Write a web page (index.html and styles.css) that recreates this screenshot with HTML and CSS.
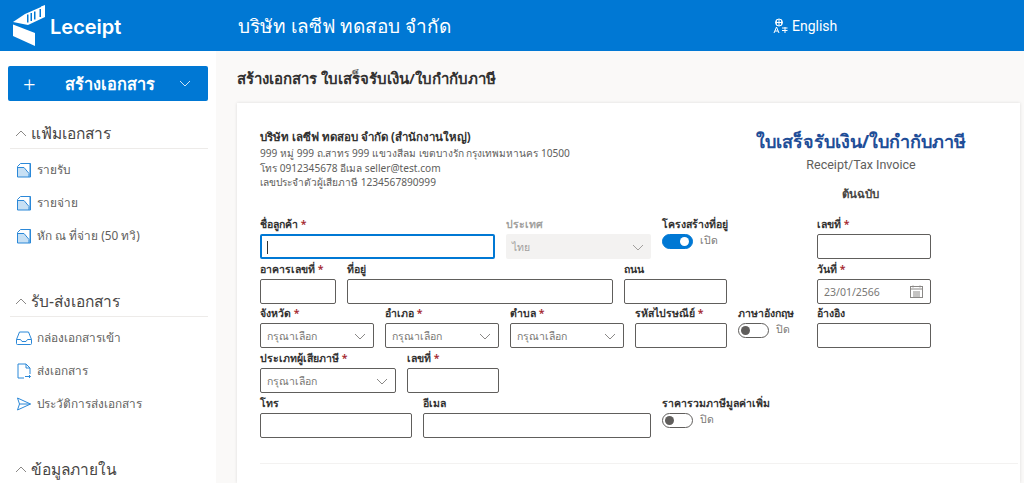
FILE: index.html
```html
<!DOCTYPE html>
<html lang="th">
<head>
<meta charset="utf-8">
<title>Leceipt</title>
<link rel="stylesheet" href="styles.css">
</head>
<body>
<header class="topbar">
  <div class="brand">
    <svg class="logo" width="34" height="42" viewBox="0 0 34 42"><path fill="#fff" d="M0 19.500L22 28V41L0 31Z"/><path fill="#fff" d="M0 17L12 9 28 2V1.500L32 0V12L15 20Z"/><path fill="#0078d4" d="M14 9.500h1.500v8H14zM17.500 8h1.500v8h-1.500zM21 6.500h1.500v8H21zM26.500 4h1.500v8h-1.500z"/></svg>
    <span class="brand-name">Leceipt</span>
  </div>
  <div class="company">บริษัท เลซีฟ ทดสอบ จำกัด</div>
  <div class="lang">
    <svg width="15" height="16" viewBox="0 0 15 16" fill="none" stroke="#fff" stroke-width="1"><circle cx="6" cy="4.500" r="3.500"/><path d="M2.500 4.500h7M6 1v7M4 1.500c-1 2-1 4 0 6M8 1.500c1 2 1 4 0 6M9 10h5.500M9 12.500h5.500M12 9v6M1 15l2.500-6 2.500 6M2 13h3"/></svg>
    <span>English</span>
  </div>
</header>
<div class="shell">
  <aside class="sidebar">
    <button class="create"><span class="plus">+</span><span class="create-text">สร้างเอกสาร</span><svg class="chev" width="12" height="7" viewBox="0 0 12 7"><path d="M1 1l5 5 5-5" fill="none" stroke="#cfe4f6"/></svg></button>
    <section class="nav-group">
      <h3 class="nav-title"><svg width="12" height="7" viewBox="0 0 12 7"><path d="M1 6l5-5 5 5" fill="none" stroke="#8a8886"/></svg>แฟ้มเอกสาร</h3>
      <a class="nav-item"><svg class="nav-icon" viewBox="0 0 16 16"><path fill="#c7e0f4" d="M2 6h6l5 6v3H2z"/><path fill="none" stroke="#2b88d8" d="M1.500 4.500L4.500 1.500h10v13.500h-13zM1.500 5.500h6.500l5 6v3.500M14 1.500v13"/></svg>รายรับ</a>
      <a class="nav-item"><svg class="nav-icon" viewBox="0 0 16 16"><path fill="#c7e0f4" d="M2 6h6l5 6v3H2z"/><path fill="none" stroke="#2b88d8" d="M1.500 4.500L4.500 1.500h10v13.500h-13zM1.500 5.500h6.500l5 6v3.500M14 1.500v13"/></svg>รายจ่าย</a>
      <a class="nav-item"><svg class="nav-icon" viewBox="0 0 16 16"><path fill="#c7e0f4" d="M2 6h6l5 6v3H2z"/><path fill="none" stroke="#2b88d8" d="M1.500 4.500L4.500 1.500h10v13.500h-13zM1.500 5.500h6.500l5 6v3.500M14 1.500v13"/></svg>หัก ณ ที่จ่าย (50 ทวิ)</a>
    </section>
    <section class="nav-group">
      <h3 class="nav-title"><svg width="12" height="7" viewBox="0 0 12 7"><path d="M1 6l5-5 5 5" fill="none" stroke="#8a8886"/></svg>รับ-ส่งเอกสาร</h3>
      <a class="nav-item"><svg class="nav-icon" viewBox="0 0 16 16" fill="none" stroke="#2b88d8"><path d="M3.500 2h9l3 7.500v4a1 1 0 0 1-1 1h-13a1 1 0 0 1-1-1v-4z"/><path d="M.5 9.500h4l1.500 2h4l1.500-2h4"/></svg>กล่องเอกสารเข้า</a>
      <a class="nav-item"><svg class="nav-icon" viewBox="0 0 16 16" fill="none" stroke="#2b88d8"><path d="M8 15H2V1h8l4 4v6"/><path d="M10 1v4h4M9 13.500h5.500M13 12l1.500 1.500L13 15"/></svg>ส่งเอกสาร</a>
      <a class="nav-item"><svg class="nav-icon" viewBox="0 0 16 16" fill="none" stroke="#2b88d8"><path d="M1.500 2l13 6-13 6 2-6zM3.500 8h11"/></svg>ประวัติการส่งเอกสาร</a>
    </section>
    <section class="nav-group">
      <h3 class="nav-title nav-title-last"><svg width="12" height="7" viewBox="0 0 12 7"><path d="M1 6l5-5 5 5" fill="none" stroke="#8a8886"/></svg>ข้อมูลภายใน</h3>
    </section>
  </aside>
  <main class="main">
    <h2 class="page-title">สร้างเอกสาร ใบเสร็จรับเงิน/ใบกำกับภาษี</h2>
    <div class="card">
      <div class="doc-head">
        <div class="seller">
          <div class="seller-name">บริษัท เลซีฟ ทดสอบ จำกัด (สำนักงานใหญ่)</div>
          <div>999 หมู่ 999 ถ.สาทร 999 แขวงสีลม เขตบางรัก กรุงเทพมหานคร 10500</div>
          <div>โทร 0912345678 อีเมล seller@test.com</div>
          <div>เลขประจำตัวผู้เสียภาษี 1234567890999</div>
        </div>
        <div class="doc-type">
          <div class="doc-th">ใบเสร็จรับเงิน/ใบกำกับภาษี</div>
          <div class="doc-en">Receipt/Tax Invoice</div>
          <div class="doc-copy">ต้นฉบับ</div>
        </div>
      </div>
      <form class="form">
        <div class="row">
          <div class="field w235"><label>ชื่อลูกค้า <i>*</i></label><div class="box focus"><span class="caret"></span></div></div>
          <div class="field w145"><label class="off">ประเทศ</label><div class="box disabled"><span>ไทย</span><svg class="dd" width="12" height="7" viewBox="0 0 12 7"><path d="M1 1l5 5 5-5" fill="none" stroke="#a19f9d"/></svg></div></div>
          <div class="field w144"><label>โครงสร้างที่อยู่</label><div class="toggle-line"><span class="toggle on"></span><span class="toggle-text">เปิด</span></div></div>
          <div class="field w114"><label>เลขที่ <i>*</i></label><div class="box"></div></div>
        </div>
        <div class="row">
          <div class="field w76"><label>อาคารเลขที่ <i>*</i></label><div class="box"></div></div>
          <div class="field w266"><label>ที่อยู่</label><div class="box"></div></div>
          <div class="field w103"><label>ถนน</label><div class="box"></div></div>
          <div class="field w68"></div>
          <div class="field w114"><label>วันที่ <i>*</i></label><div class="box"><span>23/01/2566</span><svg class="dd" width="13" height="13" viewBox="0 0 13 13" fill="none" stroke="#8a8886"><rect x=".5" y="1.500" width="12" height="11"/><path d="M.5 4h12M3 7h7M3 9h7M3 11h7M3 .5v2M10 .5v2"/></svg></div></div>
        </div>
        <div class="row">
          <div class="field w114"><label>จังหวัด <i>*</i></label><div class="box"><span>กรุณาเลือก</span><svg class="dd" width="12" height="7" viewBox="0 0 12 7"><path d="M1 1l5 5 5-5" fill="none" stroke="#8a8886"/></svg></div></div>
          <div class="field w114"><label>อำเภอ <i>*</i></label><div class="box"><span>กรุณาเลือก</span><svg class="dd" width="12" height="7" viewBox="0 0 12 7"><path d="M1 1l5 5 5-5" fill="none" stroke="#8a8886"/></svg></div></div>
          <div class="field w114"><label>ตำบล <i>*</i></label><div class="box"><span>กรุณาเลือก</span><svg class="dd" width="12" height="7" viewBox="0 0 12 7"><path d="M1 1l5 5 5-5" fill="none" stroke="#8a8886"/></svg></div></div>
          <div class="field w92"><label>รหัสไปรษณีย์ <i>*</i></label><div class="box"></div></div>
          <div class="field w68"><label>ภาษาอังกฤษ</label><div class="toggle-line"><span class="toggle"></span><span class="toggle-text">ปิด</span></div></div>
          <div class="field w114"><label>อ้างอิง</label><div class="box"></div></div>
        </div>
        <div class="row">
          <div class="field w136"><label>ประเภทผู้เสียภาษี <i>*</i></label><div class="box"><span>กรุณาเลือก</span><svg class="dd" width="12" height="7" viewBox="0 0 12 7"><path d="M1 1l5 5 5-5" fill="none" stroke="#8a8886"/></svg></div></div>
          <div class="field w92"><label>เลขที่ <i>*</i></label><div class="box"></div></div>
        </div>
        <div class="row">
          <div class="field w152"><label>โทร</label><div class="box"></div></div>
          <div class="field w228"><label>อีเมล</label><div class="box"></div></div>
          <div class="field w144"><label class="nowrap">ราคารวมภาษีมูลค่าเพิ่ม</label><div class="toggle-line"><span class="toggle"></span><span class="toggle-text">ปิด</span></div></div>
        </div>
      </form>
      <hr class="rule">
    </div>
  </main>
</div>
</body>
</html>
```
FILE: styles.css
```css
* { box-sizing: border-box; }
html, body { margin: 0; height: 483px; overflow: hidden; }
body { font-family: "Noto Sans", "Open Sans", "Segoe UI", sans-serif; color: #323130; background: #faf9f8; font-size: 11px; }
.topbar { height: 51px; background: #0078d4; color: #fff; display: flex; align-items: center; }
.brand { width: 238px; display: flex; align-items: center; padding-left: 13px; gap: 3px; }
.logo { display: block; margin-top: 1px; }
.brand-name { font-family: "Inter", sans-serif; font-weight: 600; font-size: 20px; padding-top: 3px; }
.company { font-size: 19px; width: 535px; white-space: nowrap; }
.lang { display: flex; align-items: center; gap: 4px; font-size: 14px; font-family: "Roboto", sans-serif; }
.shell { display: flex; height: 432px; }
.sidebar { width: 216px; background: #fff; padding: 15px 8px 0; flex: none; overflow: hidden; }
.create { width: 200px; height: 35px; background: #0078d4; border: 0; border-radius: 2px; color: #fff; display: flex; align-items: center; padding: 0 17px 0 15px; font-family: inherit; }
.plus { font-size: 22px; font-weight: 300; line-height: 1; width: 42px; text-align: left; }
.create-text { font-size: 16.300px; font-weight: 700; width: 100px; flex: none; text-align: left; }
.chev { margin-left: auto; }
.nav-group { margin-bottom: 17px; }
.nav-title { margin: 0 0 4px 2px; padding: 17px 0 0 5px; height: 48px; border-bottom: 1px solid #edebe9; font-size: 15.500px; font-weight: 400; color: #484644; display: flex; align-items: center; gap: 4px; }
.nav-title-last { border-bottom-color: transparent; }
.nav-item { display: flex; align-items: center; height: 33px; padding-left: 8px; gap: 5px; font-size: 11.800px; color: #605e5c; }
.nav-icon { width: 16px; height: 16px; flex: none; }
.main { flex: 1; padding: 0 4px 0 21px; min-width: 0; }
.page-title { margin: 0; height: 52px; padding-top: 4px; display: flex; align-items: center; font-size: 15px; font-weight: 600; color: #323130; }
.card { background: #fff; height: 380px; padding: 22px 2px 0 23px; box-shadow: 0 0 3px rgba(0,0,0,.12); }
.doc-head { display: flex; height: 89px; }
.seller { width: 481px; font-size: 10.150px; line-height: 14.500px; color: #605e5c; padding-top: 3px; }
.seller-name { font-weight: 700; font-size: 11.500px; color: #323130; line-height: 18px; }
.doc-type { width: 240px; text-align: center; }
.doc-th { font-size: 18px; font-weight: 700; color: #1f4e98; line-height: 32px; }
.doc-en { font-size: 12.500px; color: #605e5c; font-family: "Roboto", sans-serif; line-height: 14px; margin-top: 1px; }
.doc-copy { font-size: 11.500px; font-weight: 600; color: #484644; margin-top: 13px; padding-right: 2px; }
.row { display: flex; gap: 11px; height: 44.700px; }
.field { flex: none; }
.w235 { width: 235px; } .w145 { width: 145px; } .w144 { width: 144px; } .w114 { width: 114px; }
.w76 { width: 76px; } .w266 { width: 266px; } .w103 { width: 103px; } .w68 { width: 68px; }
.w136 { width: 136px; } .w92 { width: 92px; } .w152 { width: 152px; } .w228 { width: 228px; }
label { display: block; height: 20px; line-height: 20px; font-size: 10.500px; font-weight: 600; color: #323130; white-space: nowrap; }
label i { color: #a4262c; font-style: normal; }
label.off { color: #a19f9d; }
.box { height: 25px; border: 1px solid #605e5c; border-radius: 2px; background: #fff; display: flex; align-items: center; justify-content: space-between; padding: 1px 7px 0 6px; font-size: 10.500px; color: #797775; }
.box.focus { border: 2px solid #0078d4; justify-content: flex-start; padding-left: 5px; }
.caret { width: 1px; height: 13px; background: #323130; }
.box.disabled { border: 0; background: #f3f2f1; color: #a19f9d; }
.dd { flex: none; }
.toggle-line { display: flex; align-items: flex-start; gap: 7px; }
.toggle { width: 31px; height: 15px; border: 1px solid #605e5c; border-radius: 8px; background: #fff; display: block; position: relative; }
.toggle::after { content: ""; position: absolute; left: 2px; top: 2px; width: 9px; height: 9px; border-radius: 50%; background: #605e5c; }
.toggle.on { background: #0078d4; border-color: #0078d4; }
.toggle.on::after { left: auto; right: 3px; background: #fff; }
.toggle-text { font-size: 10.500px; line-height: 13px; color: #797775; }
.rule { border: 0; border-top: 1px solid #f3f2f1; margin: 26px 0 0; }
.nowrap { white-space: nowrap; }
```
